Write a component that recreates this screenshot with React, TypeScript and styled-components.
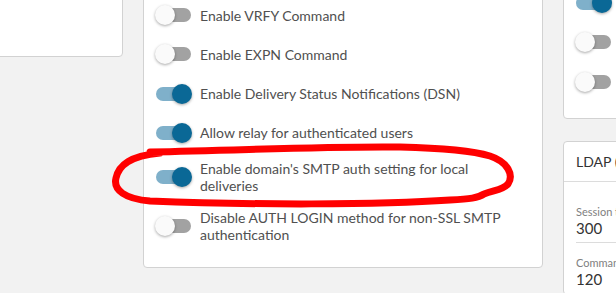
import styled, { createGlobalStyle } from "styled-components";

const GlobalStyle = createGlobalStyle`
  html, body {
    margin: 0;
    padding: 0;
    width: 616px;
    height: 293px;
    overflow: hidden;
    background: #f2f2f2;
  }
  body {
    font-family: Lato, "Segoe UI", sans-serif;
  }
`;

type Option = { label: string; on?: boolean };

const smtpOptions: Option[] = [
  { label: "Enable VRFY Command" },
  { label: "Enable EXPN Command" },
  { label: "Enable Delivery Status Notifications (DSN)", on: true },
  { label: "Allow relay for authenticated users", on: true },
  { label: "Enable domain's SMTP auth setting for local deliveries", on: true },
  { label: "Disable AUTH LOGIN method for non-SSL SMTP authentication" },
];

const sideOptions: Option[] = [
  { label: "Enable SMTP authentication", on: true },
  { label: "Require SSL for authentication" },
  { label: "Require SPF pass" },
];

const ldapFields = [
  { label: "Session timeout", value: "300" },
  { label: "Command timeout", value: "120" },
];

const App = () => {
  return (
    <Stage>
      <GlobalStyle />
      <Columns>
        <BlankCard />
        <OptionsCard $top={42}>
          <OptionList>
            {smtpOptions.map((o) => (
              <OptionRow key={o.label}>
                <Switch $on={o.on} />
                <OptionLabel>{o.label}</OptionLabel>
              </OptionRow>
            ))}
          </OptionList>
        </OptionsCard>
        <SideColumn>
          <OptionsCard $top={30}>
            <OptionList>
              {sideOptions.map((o) => (
                <OptionRow key={o.label}>
                  <Switch $on={o.on} />
                  <OptionLabel>{o.label}</OptionLabel>
                </OptionRow>
              ))}
            </OptionList>
          </OptionsCard>
          <FieldCard>
            <CardHeader>LDAP (Directory)</CardHeader>
            <FieldBody>
              {ldapFields.map((f) => (
                <Field key={f.label}>
                  <FieldLabel>{f.label}</FieldLabel>
                  <FieldValue>{f.value}</FieldValue>
                </Field>
              ))}
            </FieldBody>
          </FieldCard>
        </SideColumn>
      </Columns>
      <Annotation viewBox="0 0 616 293">
        <path
          d="M 150 152 C 250 150, 330 146, 400 147 C 440 148, 470 150, 490 156 C 508 162, 514 175, 508 184 C 503 190, 494 190, 484 194 C 478 198, 470 199, 450 200 C 380 205, 250 205, 150 201 C 125 199, 113 190, 116 178 C 119 165, 130 156, 160 153"
          fill="none"
          stroke="#ff0000"
          strokeWidth="7"
          strokeLinecap="round"
          strokeLinejoin="round"
        />
      </Annotation>
    </Stage>
  );
};

const Stage = styled.div`
  position: relative;
  width: 616px;
  height: 293px;
  overflow: hidden;
`;

const Columns = styled.div`
  display: grid;
  grid-template-columns: 153px 400px 300px;
  column-gap: 20px;
  align-items: start;
  margin: -40px 0 0 -30px;
`;

const Card = styled.div`
  box-sizing: border-box;
  background: #ffffff;
  border: 1px solid #d2d2d2;
  border-radius: 4px;
`;

const BlankCard = styled(Card)`
  height: 97px;
`;

const OptionsCard = styled(Card)<{ $top: number }>`
  padding: ${(p) => p.$top}px 20px 24px 11px;
`;

const OptionList = styled.div`
  display: flex;
  flex-direction: column;
  gap: 15.3px;
`;

const OptionRow = styled.div`
  display: flex;
  align-items: center;
  gap: 8px;
  min-height: 24px;
`;

const Switch = styled.span<{ $on?: boolean }>`
  position: relative;
  flex: none;
  width: 37px;
  height: 20px;

  &::before {
    content: "";
    position: absolute;
    left: 1px;
    right: 1px;
    top: 3px;
    height: 14px;
    border-radius: 7px;
    background: ${(p) => (p.$on ? "#7fb0ca" : "#a2a2a2")};
  }

  &::after {
    content: "";
    position: absolute;
    top: 0;
    left: ${(p) => (p.$on ? "17px" : "0")};
    width: 20px;
    height: 20px;
    border-radius: 50%;
    background: ${(p) => (p.$on ? "#0a6896" : "#fafafa")};
    box-shadow: 0 1px 3px rgba(0, 0, 0, 0.35);
  }
`;

const OptionLabel = styled.span`
  font-size: 14px;
  line-height: 17px;
  color: #505050;
`;

const SideColumn = styled.div`
  display: flex;
  flex-direction: column;
  gap: 22px;
`;

const FieldCard = styled(Card)``;

const CardHeader = styled.div`
  height: 39px;
  padding: 0 12px;
  display: flex;
  align-items: center;
  border-bottom: 1px solid #dcdcdc;
  font-size: 14px;
  color: #333333;
  white-space: nowrap;
`;

const FieldBody = styled.div`
  padding: 10px 12px 0;
`;

const Field = styled.div`
  padding: 13px 0 5px;
  border-bottom: 1px solid #dcdcdc;
`;

const FieldLabel = styled.div`
  font-size: 11px;
  line-height: 14px;
  color: #808080;
`;

const FieldValue = styled.div`
  font-size: 15px;
  line-height: 18px;
  color: #333333;
`;

const Annotation = styled.svg`
  position: absolute;
  left: 0;
  top: 0;
  width: 616px;
  height: 293px;
  pointer-events: none;
`;

export default App;
